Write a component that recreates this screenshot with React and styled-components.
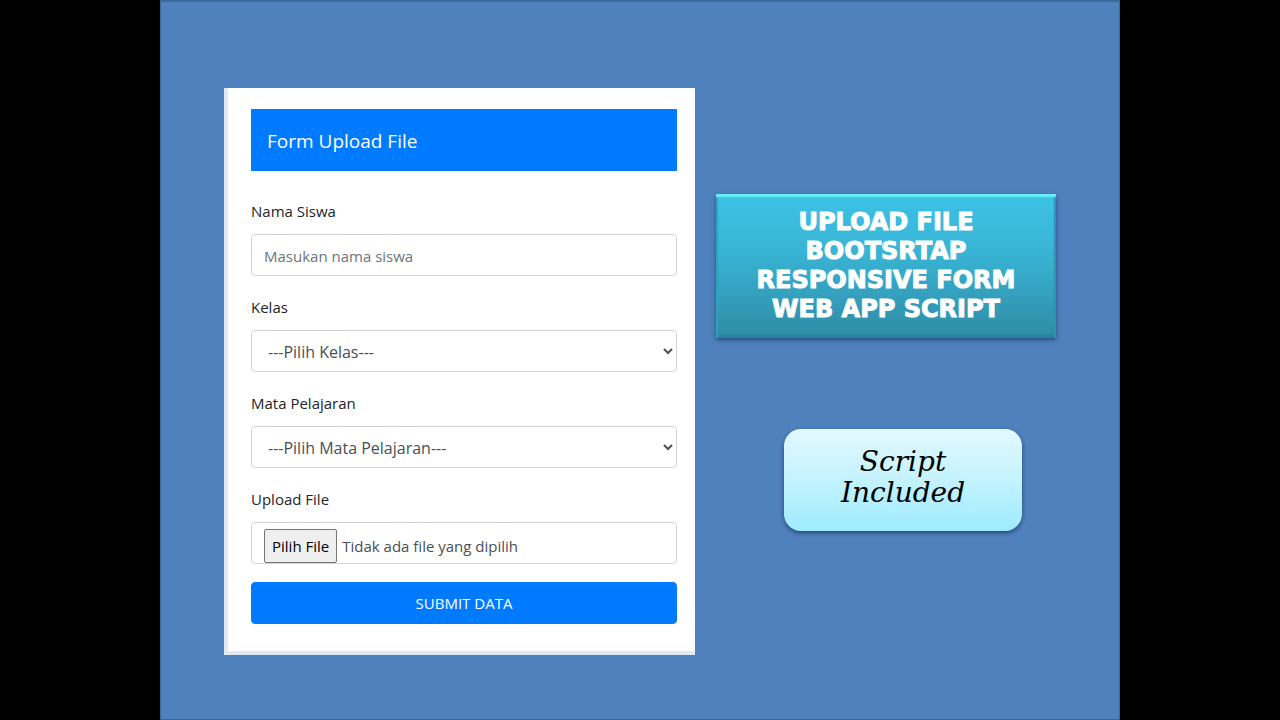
import React, { useState } from "react";
import styled, { createGlobalStyle, css } from "styled-components";

const GlobalStyle = createGlobalStyle`
  *, *::before, *::after { box-sizing: border-box; }
  body {
    margin: 0;
    background: #000;
    font-family: "Segoe UI", "Open Sans", "Noto Sans", sans-serif;
    font-size: 15px;
    line-height: 24px;
    color: #212529;
  }
`;

const Slide = styled.main`
  display: grid;
  grid-template-columns: 471fr 340fr;
  column-gap: 21px;
  align-items: start;
  max-width: 960px;
  min-height: 100vh;
  margin: 0 auto;
  padding: 86px 63px 64px 63px;
  background: #4f81bd;
  border: 1px solid #3c6799;
  border-width: 2px 1px 1px;
`;

const FormCard = styled.form`
  display: flex;
  flex-direction: column;
  padding: 21px 18px 27px 23px;
  background: #fff;
  border: 0 solid #e1e9f3;
  border-width: 0 0 4px 4px;
`;

const FormTitle = styled.h1`
  margin: 0 0 28px;
  padding: 18px 16px 16px;
  background: #007bff;
  color: #fff;
  font-size: 19px;
  font-weight: 400;
  line-height: 28px;
`;

const Field = styled.div`
  display: flex;
  flex-direction: column;
  gap: 11px;
  margin-bottom: ${({ $last }) => ($last ? 18 : 19)}px;
`;

const Label = styled.label`
  line-height: 24px;
`;

const control = css`
  width: 100%;
  height: 42px;
  padding: 2px 12px 0;
  background: #fff;
  border: 1px solid #ced4da;
  border-radius: 4px;
  color: #495057;
  font: inherit;
`;

const TextInput = styled.input`
  ${control}
  &::placeholder { color: #6c757d; opacity: 1; }
`;

const Select = styled.select`
  ${control}
  padding-right: 0;
  font-size: 16px;
`;

const FileBox = styled.div`
  ${control}
  display: flex;
  align-items: flex-end;
  gap: 5px;
  padding: 0 12px;
`;

const FileInput = styled.input`
  position: absolute;
  width: 1px;
  height: 1px;
  opacity: 0;
`;

const FileButton = styled.label`
  padding: 4px 7px;
  background: #efefef;
  border: 1px solid #767676;
  border-radius: 2px;
  color: #000;
  line-height: 24px;
  white-space: nowrap;
  cursor: pointer;
`;

const FileName = styled.span`
  padding-bottom: 5px;
  line-height: 24px;
`;

const SubmitButton = styled.button`
  height: 42px;
  padding: 0 12px;
  background: #007bff;
  border: 1px solid #007bff;
  border-radius: 4px;
  color: #fff;
  font: inherit;
`;

const Aside = styled.aside`
  display: flex;
  flex-direction: column;
  gap: 91px;
  padding-top: 106px;
`;

const Banner = styled.h2`
  margin: 0;
  padding: 14px 30px;
  background: linear-gradient(#3cc2e6, #39b4d5 40%, #2f8ca6);
  box-shadow:
    inset 0 4px 2px -1px #6ff0ff,
    inset 2px 0 1px #319fbd,
    inset -2px 0 1px #2b91ad,
    inset 0 -3px 2px #28809a,
    0 2px 4px rgba(15, 40, 75, 0.6);
  color: #fff;
  font-family: "Arial Black", "DejaVu Sans", sans-serif;
  font-size: 24px;
  font-weight: 900;
  line-height: 29px;
  text-align: center;
  -webkit-text-stroke: 1px #fff;
`;

const Line = styled.span`
  display: block;
  white-space: nowrap;
`;

const Note = styled.p`
  margin: 0 34px 0 68px;
  padding: 17px 16px 23px;
  background: linear-gradient(#e2f8ff, #c4f3ff 50%, #9eebff);
  border-radius: 17px;
  box-shadow: 0 2px 4px rgba(10, 40, 80, 0.65);
  color: #000;
  font-family: "Lucida Handwriting", "DejaVu Serif", serif;
  font-size: 28px;
  font-style: italic;
  line-height: 31px;
  text-align: center;
`;

export default function App() {
  const [fileName, setFileName] = useState("Tidak ada file yang dipilih");

  return (
    <>
      <GlobalStyle />
      <Slide>
        <FormCard onSubmit={(e) => e.preventDefault()}>
          <FormTitle>Form Upload File</FormTitle>
          <Field>
            <Label htmlFor="nama">Nama Siswa</Label>
            <TextInput id="nama" type="text" placeholder="Masukan nama siswa" />
          </Field>
          <Field>
            <Label htmlFor="kelas">Kelas</Label>
            <Select id="kelas">
              <option>---Pilih Kelas---</option>
            </Select>
          </Field>
          <Field>
            <Label htmlFor="mapel">Mata Pelajaran</Label>
            <Select id="mapel">
              <option>---Pilih Mata Pelajaran---</option>
            </Select>
          </Field>
          <Field $last>
            <Label htmlFor="berkas">Upload File</Label>
            <FileBox>
              <FileInput
                id="berkas"
                type="file"
                onChange={(e) => e.target.files[0] && setFileName(e.target.files[0].name)}
              />
              <FileButton htmlFor="berkas">Pilih File</FileButton>
              <FileName>{fileName}</FileName>
            </FileBox>
          </Field>
          <SubmitButton type="submit">SUBMIT DATA</SubmitButton>
        </FormCard>
        <Aside>
          <Banner>
            <Line>UPLOAD FILE</Line>
            <Line>BOOTSRTAP</Line>
            <Line>RESPONSIVE FORM</Line>
            <Line>WEB APP SCRIPT</Line>
          </Banner>
          <Note>
            <Line>Script</Line>
            <Line>Included</Line>
          </Note>
        </Aside>
      </Slide>
    </>
  );
}
